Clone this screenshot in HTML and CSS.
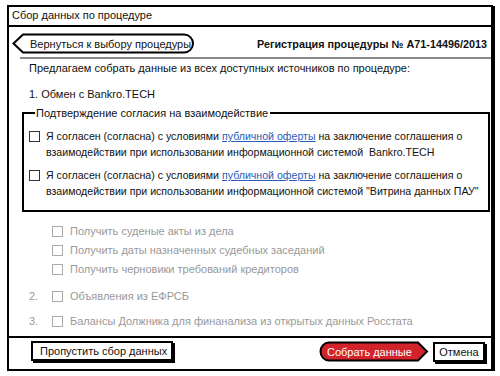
FILE: index.html
```html
<!DOCTYPE html>
<html lang="ru">
<head>
<meta charset="utf-8">
<title>Сбор данных по процедуре</title>
<link rel="stylesheet" href="styles.css">
</head>
<body>
<div class="window">
  <div class="titlebar">Сбор данных по процедуре</div>
  <div class="toolbar">
    <div class="back-btn">
      <svg class="shape" width="182" height="21" viewBox="0 0 182 21"><path d="M11 1.5 H172 A8.5 8.5 0 0 1 172 19.5 H11 L1.5 10.5 Z" fill="#fff" stroke="#000" stroke-width="2"/></svg>
      <span class="label">Вернуться к выбору процедуры</span>
    </div>
    <div class="reg">Регистрация процедуры № А71-14496/2013</div>
  </div>
  <div class="rule"></div>
  <div class="content">
    <p class="intro">Предлагаем собрать данные из всех доступных источников по процедуре:</p>
    <p class="step">1. Обмен с Bankro.TECH</p>
    <fieldset class="consent">
      <legend>Подтверждение согласия на взаимодействие</legend>
      <div class="check-row">
        <span class="box"></span>
        <span class="check-text">Я согласен (согласна) с условиями <a href="#">публичной оферты</a> на заключение соглашения о взаимодействии при использовании информационной системой &nbsp;Bankro.TECH</span>
      </div>
      <div class="check-row second">
        <span class="box"></span>
        <span class="check-text">Я согласен (согласна) с условиями <a href="#">публичной оферты</a> на заключение соглашения о взаимодействии при использовании информационной системой "Витрина данных ПАУ"</span>
      </div>
    </fieldset>
    <div class="sub-list">
      <div class="item"><span class="box gray"></span>Получить суденые акты из дела</div>
      <div class="item"><span class="box gray"></span>Получить даты назначенных судебных заседаний</div>
      <div class="item"><span class="box gray"></span>Получить черновики требований кредиторов</div>
    </div>
    <div class="num-item n2"><span class="num">2.</span><span class="box gray"></span>Объявления из ЕФРСБ</div>
    <div class="num-item n3"><span class="num">3.</span><span class="box gray"></span>Балансы Должника для финанализа из открытых данных Росстата</div>
  </div>
  <div class="footer">
    <div class="btn skip">Пропустить сбор данных</div>
    <div class="right-btns">
      <div class="collect">
        <svg class="shape" width="110" height="21" viewBox="0 0 110 21"><path d="M10 1.5 H99 L108 10.5 L99 19.5 H10 A8.5 9 0 0 1 10 1.5 Z" fill="#d2232a" stroke="#000" stroke-width="2"/></svg>
        <span class="label">Собрать данные</span>
      </div>
      <div class="btn cancel">Отмена</div>
    </div>
  </div>
</div>
</body>
</html>
```

FILE: styles.css
```css
* { box-sizing: border-box; }
html, body { margin: 0; padding: 0; background: #fff; }
body { font-family: "Liberation Sans", Arial, sans-serif; font-size: 11px; color: #111; }

.window {
  margin: 5px 0 0 7px;
  width: 486px;
  height: 366px;
  border: 2px solid #000;
  box-shadow: 2px 1px 0 #000;
  display: flex;
  flex-direction: column;
  background: #fff;
}

.titlebar {
  height: 20px;
  line-height: 17px;
  padding-left: 3px;
  border-bottom: 2px solid #000;
  font-size: 11px;
}

.toolbar {
  display: flex;
  justify-content: space-between;
  align-items: center;
  margin-top: 6px;
  padding: 0 3px 0 3px;
  height: 21px;
}

.back-btn {
  position: relative;
  width: 182px;
  height: 21px;
  display: flex;
  align-items: center;
}
.back-btn .shape, .collect .shape { position: absolute; left: 0; top: 0; }
.back-btn .label { position: relative; padding-left: 18px; font-size: 11px; }

.reg { font-weight: bold; font-size: 10.8px; padding-right: 1px; }

.rule {
  height: 2px;
  background: #8a8a8a;
  margin: 3px 0 0 11px;
}

.content { padding-left: 20px; flex: 1; }
.content p { margin: 0; line-height: 16px; }
.intro { margin-top: 1px !important; }
.step { margin-top: 10px !important; }

.consent {
  margin: 4px 1px 0 -7px;
  border: 2px solid #000;
  padding: 8px 6px 11px 5px;
}
.consent legend {
  padding: 0 2px 0 1px;
  margin-left: 6px;
  line-height: 14px;
}

.check-row { display: flex; align-items: flex-start; gap: 6px; line-height: 16px; }
.check-row.second { margin-top: 7px; }
.check-row .box { margin-top: 3px; }
.check-text { font-size: 10.6px; }
.check-text a { color: #2a5db8; text-decoration: underline; }

.box {
  flex: none;
  display: inline-block;
  width: 11px;
  height: 11px;
  border: 1.5px solid #333;
  background: #fff;
}
.box.gray { border-color: #aaa; }

.sub-list { margin-top: 10px; padding-left: 23px; color: #999; }
.item { display: flex; align-items: center; gap: 7px; line-height: 19px; }

.num-item { display: flex; align-items: center; line-height: 19px; color: #999; }
.num-item .num { width: 23px; }
.num-item .box { margin-right: 7px; }
.n2 { margin-top: 8px; }
.n3 { margin-top: 6px; }

.footer {
  border-top: 2px solid #000;
  height: 33px;
  display: flex;
  justify-content: space-between;
  align-items: flex-start;
  padding: 3px 6px 0 22px;
}

.btn {
  border: 2px solid #000;
  box-shadow: 2px 2px 0 #000;
  height: 20px;
  line-height: 16px;
  background: #fff;
}
.skip { width: 142px; padding-left: 7px; }

.right-btns { display: flex; align-items: flex-start; gap: 4px; }
.collect {
  position: relative;
  width: 110px;
  height: 21px;
  display: flex;
  align-items: center;
}
.collect .label { position: relative; color: #fff; padding-left: 8px; font-size: 11px; }
.cancel { width: 52px; margin-top: 1px; text-align: center; }
```
